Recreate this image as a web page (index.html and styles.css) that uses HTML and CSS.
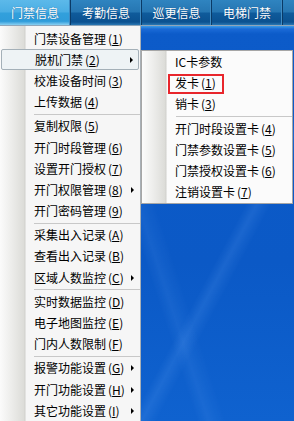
FILE: index.html
```html
<!DOCTYPE html>
<html lang="zh">
<head>
<meta charset="utf-8">
<title>门禁信息</title>
<link rel="stylesheet" href="styles.css">
</head>
<body>
<div class="screen">
  <div class="tabbar">
    <div class="tab active">门禁信息</div>
    <div class="tab">考勤信息</div>
    <div class="tab narrow">巡更信息</div>
    <div class="tab">电梯门禁</div>
    <div class="tab rest"></div>
  </div>
  <div class="content">
    <div class="menu main-menu">
      <div class="item">门禁设备管理<span class="key">(<u>1</u>)</span></div>
      <div class="item hover">脱机门禁<span class="key">(<u>2</u>)</span><span class="arrow"></span></div>
      <div class="item">校准设备时间<span class="key">(<u>3</u>)</span></div>
      <div class="item">上传数据<span class="key">(<u>4</u>)</span></div>
      <div class="sep"></div>
      <div class="item">复制权限<span class="key">(<u>5</u>)</span></div>
      <div class="item">开门时段管理<span class="key">(<u>6</u>)</span></div>
      <div class="item">设置开门授权<span class="key">(<u>7</u>)</span></div>
      <div class="item">开门权限管理<span class="key">(<u>8</u>)</span><span class="arrow"></span></div>
      <div class="item">开门密码管理<span class="key">(<u>9</u>)</span></div>
      <div class="sep"></div>
      <div class="item">采集出入记录<span class="key">(<u>A</u>)</span></div>
      <div class="item">查看出入记录<span class="key">(<u>B</u>)</span></div>
      <div class="item">区域人数监控<span class="key">(<u>C</u>)</span><span class="arrow"></span></div>
      <div class="sep"></div>
      <div class="item">实时数据监控<span class="key">(<u>D</u>)</span></div>
      <div class="item">电子地图监控<span class="key">(<u>E</u>)</span></div>
      <div class="item">门内人数限制<span class="key">(<u>F</u>)</span></div>
      <div class="sep"></div>
      <div class="item">报警功能设置<span class="key">(<u>G</u>)</span><span class="arrow"></span></div>
      <div class="item">开门功能设置<span class="key">(<u>H</u>)</span><span class="arrow"></span></div>
      <div class="item">其它功能设置<span class="key">(<u>I</u>)</span><span class="arrow"></span></div>
    </div>
    <div class="desktop"></div>
    <div class="menu sub-menu">
      <div class="item">IC卡参数</div>
      <div class="item">发卡<span class="key">(<u>1</u>)</span></div>
      <div class="item">销卡<span class="key">(<u>3</u>)</span></div>
      <div class="sep"></div>
      <div class="item">开门时段设置卡<span class="key">(<u>4</u>)</span></div>
      <div class="item">门禁参数设置卡<span class="key">(<u>5</u>)</span></div>
      <div class="item">门禁授权设置卡<span class="key">(<u>6</u>)</span></div>
      <div class="item">注销设置卡<span class="key">(<u>7</u>)</span></div>
      <div class="mark"></div>
    </div>
  </div>
</div>
</body>
</html>
```

FILE: styles.css
```css
* { box-sizing: border-box; }
html, body { margin: 0; padding: 0; }
body {
  width: 294px;
  height: 421px;
  overflow: hidden;
  font-family: "Noto Sans CJK SC", "Noto Sans", sans-serif;
  font-size: 12px;
  color: #000;
}
.screen {
  width: 294px;
  height: 421px;
  display: flex;
  flex-direction: column;
}
.tabbar {
  display: flex;
  height: 25px;
  flex: none;
  background: linear-gradient(180deg, #2f84c0 0, #2676b2 48%, #0f5b9b 52%, #0b5190 88%, #2a78b4 100%);
}
.tab {
  width: 71px;
  flex: none;
  display: flex;
  align-items: center;
  justify-content: center;
  color: #fff;
  font-size: 12px;
  padding-bottom: 1px;
  border-right: 1px solid #0a3a66;
  box-shadow: inset -1px 0 0 #3f8cc4;
  text-shadow: 0 0 1px rgba(0, 40, 90, 0.6);
}
.tab.narrow { width: 70px; }
.tab.active {
  background: linear-gradient(180deg, #5cb9ea 0, #4aaee4 48%, #32a0dc 52%, #2f9cda 85%, #8ad0f2 100%);
}
.tab.rest { flex: 1; border-right: 0; box-shadow: none; }
.content {
  flex: 1;
  display: flex;
  position: relative;
  border-top: 1px solid #8fa6ba;
}
.desktop {
  flex: 1;
  background:
    linear-gradient(180deg, #3c9ce6 0, #1a6ad6 3px, rgba(13, 92, 203, 0) 8px),
    linear-gradient(118deg, rgba(255,255,255,0) 55%, rgba(120,180,255,0.14) 58%, rgba(255,255,255,0) 62%),
    linear-gradient(72deg, rgba(255,255,255,0) 20%, rgba(120,180,255,0.10) 24%, rgba(255,255,255,0) 30%),
    linear-gradient(180deg, #0c5bc9 0, #0b59c6 60%, #0f62cf 100%);
}
.menu {
  display: flex;
  flex-direction: column;
  background: linear-gradient(90deg, #fbfbfb 0, #ececea 12px, #dcdcd8 24px, #d0d0cc 25px, #f6f6f6 26px, #f6f6f6 100%);
}
.main-menu {
  width: 141px;
  flex: none;
  padding-top: 2px;
  border-right: 1px solid #a9b0b6;
}
.item {
  height: 21.2px;
  flex: none;
  display: flex;
  align-items: center;
  padding-left: 34px;
  position: relative;
  white-space: nowrap;
  line-height: 1;
}
.key { margin-left: 2px; }
.key u { text-decoration-thickness: 1px; text-underline-offset: 1px; }
.item.hover {
  margin: 0 1px 0 1px;
  padding-left: 33px;
  background: #eef3f5;
  border: 1px solid #a4b0b8;
  border-radius: 2px;
}
.arrow {
  position: absolute;
  right: 6px;
  top: 50%;
  margin-top: -3px;
  width: 0;
  height: 0;
  border-left: 3px solid #000;
  border-top: 3px solid transparent;
  border-bottom: 3px solid transparent;
}
.item.hover .arrow { right: 5px; }
.sep {
  height: 3px;
  flex: none;
  margin-left: 34px;
  display: flex;
  align-items: center;
}
.sep::before {
  content: "";
  display: block;
  width: 100%;
  height: 1px;
  background: #c8c8c8;
}
.sub-menu {
  position: absolute;
  left: 141px;
  top: 24px;
  width: 152px;
  padding-top: 0.4px;
  border: 1px solid #a6a6a6;
  background: linear-gradient(90deg, #fcfcfc 0, #ececea 12px, #dcdcd8 23px, #d0d0cc 24px, #fbfbfb 25px, #fbfbfb 100%);
}
.sub-menu .item { padding-left: 33px; }
.mark {
  position: absolute;
  left: 26px;
  top: 23px;
  width: 56px;
  height: 20px;
  border: 2px solid #e8262c;
}
```
